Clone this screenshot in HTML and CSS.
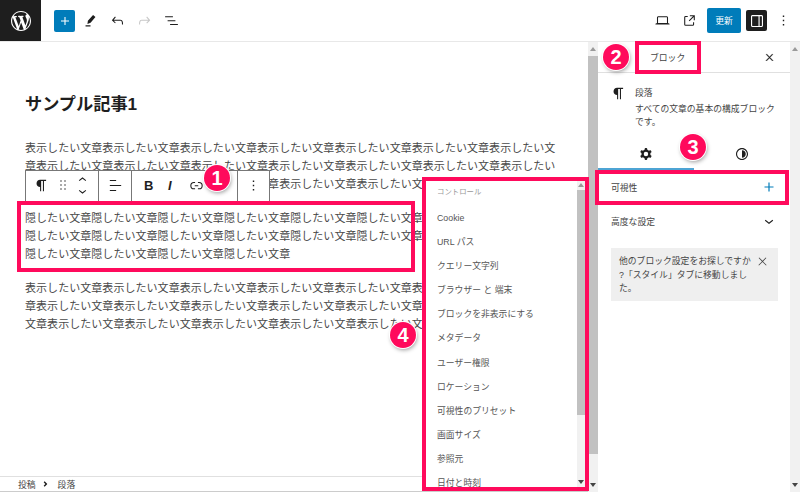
FILE: index.html
```html
<!DOCTYPE html>
<html lang="ja">
<head>
    <meta charset="UTF-8">
    <meta name="viewport" content="width=device-width, initial-scale=1.0">
    <title>サンプル記事1</title>
    <link rel="stylesheet" href="styles.css">
</head>
<body>
    <header class="topbar">
        <div class="wp-logo">
            <svg width="20" height="20" viewBox="0 0 20 20"><path fill="#fff" d="M20 10c0-5.51-4.49-10-10-10C4.48 0 0 4.49 0 10c0 5.52 4.48 10 10 10 5.51 0 10-4.48 10-10zM7.78 15.37L4.37 6.22c.55-.02 1.17-.08 1.17-.08.5-.06.44-1.13-.06-1.11 0 0-1.45.11-2.37.11-.18 0-.37 0-.58-.01C4.12 2.69 6.87 1.11 10 1.11c2.33 0 4.45.87 6.05 2.34-.68-.11-1.65.39-1.65 1.58 0 .74.45 1.36.9 2.1.35.61.55 1.36.55 2.46 0 1.49-1.4 5-1.4 5l-3.03-8.37c.54-.02.82-.17.82-.17.5-.05.44-1.25-.06-1.22 0 0-1.44.12-2.38.12-.87 0-2.33-.12-2.33-.12-.5-.03-.56 1.2-.06 1.22l.92.08 1.26 3.41zM17.41 10c.24-.64.74-1.87.43-4.25.7 1.29 1.05 2.71 1.05 4.25 0 3.29-1.73 6.24-4.4 7.78.97-2.59 1.94-5.2 2.92-7.78zM6.1 18.09C3.12 16.65 1.11 13.53 1.11 10c0-1.3.23-2.48.72-3.59C3.25 10.3 4.67 14.2 6.1 18.09zm4.03-6.63l2.58 6.98c-.86.29-1.76.45-2.71.45-.79 0-1.57-.11-2.29-.33.81-2.38 1.62-4.74 2.42-7.1z"/></svg>
        </div>
        <div class="tools">
            <button class="add-btn"><svg width="16" height="16" viewBox="0 0 24 24"><path fill="#fff" d="M18 11.2h-5.2V6h-1.6v5.2H6v1.6h5.2V18h1.6v-5.2H18z"/></svg></button>
            <span class="tool"><svg width="17" height="17" viewBox="0 0 24 24"><path fill="#1e1e1e" d="M15.6 4.2l3.4 2.9-6.9 8.1-4.4 1.6.6-4.6zM5 18.8h7v1.7H5z"/></svg></span>
            <span class="tool"><svg width="17" height="17" viewBox="0 0 24 24"><path fill="#1e1e1e" d="M18.3 11.7c-.6-.6-1.4-.9-2.3-.9H6.7l2.9-3.3-1.1-1-4.5 5L8.5 16l1-1-2.7-2.7H16c.5 0 .9.2 1.3.5 1 1 1 3.4 1 4.5v.3h1.5v-.2c0-1.5 0-4.3-1.5-5.7z"/></svg></span>
            <span class="tool"><svg width="17" height="17" viewBox="0 0 24 24"><path fill="#c8c8c8" d="M15.6 6.5l-1.1 1 2.9 3.3H8c-.9 0-1.7.3-2.3.9-1.4 1.5-1.4 4.2-1.4 5.6v.2h1.5v-.3c0-1.1 0-3.5 1-4.5.3-.3.7-.5 1.3-.5h9.2L14.5 15l1.1 1.1 4.6-4.6-4.6-5z"/></svg></span>
            <span class="tool"><svg width="17" height="17" viewBox="0 0 24 24"><path fill="#1e1e1e" d="M3 6h11v1.5H3V6zm3.5 5.5h11V13h-11v-1.5zM10 17h11v1.5H10V17z"/></svg></span>
        </div>
        <div class="actions">
            <span class="tool"><svg width="17" height="17" viewBox="0 0 24 24"><path fill="#1e1e1e" d="M20.5 16h-.7V8c0-1.1-.9-2-2-2H6.2c-1.1 0-2 .9-2 2v8h-.7c-.8 0-1.5.7-1.5 1.5h20c0-.8-.7-1.5-1.5-1.5zM5.7 8c0-.3.2-.5.5-.5h11.6c.3 0 .5.2.5.5v7.6H5.7V8z"/></svg></span>
            <span class="tool"><svg width="17" height="17" viewBox="0 0 24 24"><path fill="#1e1e1e" d="M19.5 4.5h-7V6h4.44l-5.97 5.97 1.06 1.06L18 7.06v4.44h1.5v-7Zm-13 1a2 2 0 0 0-2 2v10a2 2 0 0 0 2 2h10a2 2 0 0 0 2-2v-3H17v3a.5.5 0 0 1-.5.5h-10a.5.5 0 0 1-.5-.5v-10a.5.5 0 0 1 .5-.5h3V5.5h-3Z"/></svg></span>
            <button class="save-btn">更新</button>
            <span class="drawer-btn"><svg width="18" height="18" viewBox="0 0 24 24"><path fill="#fff" d="M18 4H6c-1.1 0-2 .9-2 2v12c0 1.1.9 2 2 2h12c1.1 0 2-.9 2-2V6c0-1.1-.9-2-2-2zm-4 14.5H6c-.3 0-.5-.2-.5-.5V6c0-.3.2-.5.5-.5h8v13zm4.5-.5c0 .3-.2.5-.5.5h-2.5v-13H18c.3 0 .5.2.5.5v12z"/></svg></span>
            <span class="more-btn"><svg width="17" height="17" viewBox="0 0 24 24"><path fill="#1e1e1e" d="M13 19h-2v-2h2v2zm0-6h-2v-2h2v2zm0-6h-2V5h2v2z"/></svg></span>
        </div>
    </header>

    <div class="workspace">
        <main class="editor">
            <div class="canvas">
                <h1 class="post-title">サンプル記事1</h1>
                <p>表示したい文章表示したい文章表示したい文章表示したい文章表示したい文章表示したい文章表示したい文章表示したい文章表示したい文章表示したい文章表示したい文章表示したい文章表示したい文章表示したい文章表示したい文章表示したい文章表示したい文章表示したい文章表示したい文章</p>
                <p>隠したい文章隠したい文章隠したい文章隠したい文章隠したい文章隠したい文章隠したい文章隠したい文章隠したい文章隠したい文章隠したい文章隠したい文章隠したい文章隠したい文章隠したい文章隠したい文章隠したい文章隠したい文章隠したい文章隠したい文章</p>
                <p>表示したい文章表示したい文章表示したい文章表示したい文章表示したい文章表示したい文章表示したい文章表示したい文章表示したい文章表示したい文章表示したい文章表示したい文章表示したい文章表示したい文章表示したい文章表示したい文章表示したい文章表示したい文章表示したい文章</p>
            </div>
            <footer class="crumbs"><span>投稿</span><svg width="8" height="8" viewBox="0 0 24 24"><path fill="#1e1e1e" d="M8 4l8 8-8 8-3-3 5-5-5-5z"/></svg><span>段落</span></footer>

            <div class="block-toolbar">
                <div class="tb-group tb-first">
                    <svg width="17" height="17" viewBox="0 0 24 24"><path fill="#1e1e1e" d="m9.99609 14v-.2251l.00391.0001v6.225h1.5v-14.5h2.5v14.5h1.5v-14.5h3v-1.5h-8.50391c-2.76142 0-5 2.23858-5 5 0 2.7614 2.23858 5 5 5z"/></svg>
                    <svg class="drag" width="16" height="16" viewBox="0 0 24 24"><path fill="#555" d="M8 7h2V5H8v2zm0 6h2v-2H8v2zm0 6h2v-2H8v2zm6-14v2h2V5h-2zm0 8h2v-2h-2v2zm0 6h2v-2h-2v2z"/></svg>
                    <span class="movers">
                        <svg width="11" height="8" viewBox="4 6 16 12"><path fill="#1e1e1e" d="M6.5 12.4L12 8l5.5 4.4-.9 1.2L12 10l-4.5 3.6-1-1.2z"/></svg>
                        <svg width="11" height="8" viewBox="4 6 16 12"><path fill="#1e1e1e" d="M17.5 11.6L12 16l-5.5-4.4.9-1.2L12 14l4.6-3.6 1 1.2z"/></svg>
                    </span>
                </div>
                <div class="tb-group tb-align">
                    <svg width="17" height="17" viewBox="0 0 24 24"><path fill="#1e1e1e" d="M4 19.8h8.9v-1.5H4v1.5zm8.9-15.6H4v1.5h8.9V4.2zm-8.9 7v1.5h16v-1.5H4z"/></svg>
                </div>
                <div class="tb-group tb-format">
                    <b class="fmt-b">B</b>
                    <i class="fmt-i">I</i>
                    <svg width="17" height="17" viewBox="0 0 24 24"><path fill="#1e1e1e" d="M10 17.389H8.444A5.194 5.194 0 1 1 8.444 7H10v1.5H8.444a3.694 3.694 0 0 0 0 7.389H10v1.5ZM14 7h1.556a5.194 5.194 0 0 1 0 10.39H14v-1.5h1.556a3.694 3.694 0 0 0 0-7.39H14V7Zm-4.5 6h5v-1.5h-5V13Z"/></svg>
                </div>
                <div class="tb-group tb-more">
                    <svg width="17" height="17" viewBox="0 0 24 24"><path fill="#1e1e1e" d="M13 19h-2v-2h2v2zm0-6h-2v-2h2v2zm0-6h-2V5h2v2z"/></svg>
                </div>
            </div>

            <div class="vis-popover">
                <ul>
                    <li class="vis-head">コントロール</li>
                    <li>Cookie</li>
                    <li>URL パス</li>
                    <li>クエリー文字列</li>
                    <li>ブラウザー と 端末</li>
                    <li>ブロックを非表示にする</li>
                    <li>メタデータ</li>
                    <li>ユーザー権限</li>
                    <li>ロケーション</li>
                    <li>可視性のプリセット</li>
                    <li>画面サイズ</li>
                    <li>参照元</li>
                    <li>日付と時刻</li>
                </ul>
                <div class="scrollbar thin"><span class="arrow up"></span><span class="thumb"></span><span class="arrow down"></span></div>
            </div>
        </main>
        <div class="scrollbar"><span class="arrow up"></span><span class="thumb"></span><span class="arrow down"></span></div>

        <aside class="sidebar">
            <div class="side-head">
                <span>ブロック</span>
                <svg width="11" height="11" viewBox="0 0 24 24"><path fill="#1e1e1e" stroke="#1e1e1e" d="M13 11.8l6.1-6.3-1-1-6.1 6.2-6.1-6.2-1 1 6.1 6.3-6.5 6.7 1 1 6.5-6.6 6.5 6.6 1-1z"/></svg>
            </div>
            <div class="block-card">
                <svg width="17" height="17" viewBox="0 0 24 24"><path fill="#1e1e1e" d="m9.99609 14v-.2251l.00391.0001v6.225h1.5v-14.5h2.5v14.5h1.5v-14.5h3v-1.5h-8.50391c-2.76142 0-5 2.23858-5 5 0 2.7614 2.23858 5 5 5z"/></svg>
                <div>
                    <div class="card-title">段落</div>
                    <div class="card-desc">すべての文章の基本の構成ブロック<br>です。</div>
                </div>
            </div>
            <div class="side-tabs">
                <span class="side-tab active"><svg width="18" height="18" viewBox="0 0 24 24"><path fill="#1e1e1e" fill-rule="evenodd" d="M10.289 4.836A1 1 0 0 1 11.275 4h1.306a1 1 0 0 1 .987.836l.244 1.466c.787.26 1.503.679 2.108 1.218l1.393-.522a1 1 0 0 1 1.216.437l.653 1.13a1 1 0 0 1-.23 1.273l-1.148.944a6.025 6.025 0 0 1 0 2.435l1.149.946a1 1 0 0 1 .23 1.272l-.653 1.13a1 1 0 0 1-1.216.437l-1.394-.522c-.605.54-1.32.958-2.108 1.218l-.244 1.466a1 1 0 0 1-.987.836h-1.306a1 1 0 0 1-.986-.836l-.244-1.466a5.995 5.995 0 0 1-2.108-1.218l-1.394.522a1 1 0 0 1-1.217-.436l-.653-1.131a1 1 0 0 1 .23-1.272l1.149-.946a6.026 6.026 0 0 1 0-2.435l-1.148-.944a1 1 0 0 1-.23-1.272l.653-1.131a1 1 0 0 1 1.217-.437l1.393.522a5.994 5.994 0 0 1 2.108-1.218l.244-1.466ZM14.929 12a3 3 0 1 1-6 0 3 3 0 0 1 6 0Z"/></svg></span>
                <span class="side-tab"><svg width="18" height="18" viewBox="0 0 24 24"><path fill="#1e1e1e" d="M12 4c-4.4 0-8 3.6-8 8s3.6 8 8 8 8-3.6 8-8-3.6-8-8-8zm0 14.5c-3.6 0-6.5-2.9-6.5-6.5S8.4 5.5 12 5.5s6.5 2.9 6.5 6.5-2.9 6.5-6.5 6.5zM12 7v10c2.8 0 5-2.2 5-5s-2.2-5-5-5z"/></svg></span>
            </div>
            <div class="panel-row">
                <span>可視性</span>
                <svg width="18" height="18" viewBox="0 0 24 24"><path fill="#007cba" d="M18 11.2h-5.2V6h-1.6v5.2H6v1.6h5.2V18h1.6v-5.2H18z"/></svg>
            </div>
            <div class="panel-row">
                <span>高度な設定</span>
                <svg width="18" height="18" viewBox="0 0 24 24"><path fill="#1e1e1e" d="M17.5 11.6L12 16l-5.5-4.4.9-1.2L12 14l4.6-3.6 1 1.2z"/></svg>
            </div>
            <div class="notice">
                <p>他のブロック設定をお探しですか<br>?「スタイル」タブに移動しまし<br>た。</p>
                <svg width="13" height="13" viewBox="0 0 24 24"><path fill="#444" d="M13 11.8l6.1-6.3-1-1-6.1 6.2-6.1-6.2-1 1 6.1 6.3-6.5 6.7 1 1 6.5-6.6 6.5 6.6 1-1z"/></svg>
            </div>
        </aside>
        <div class="scrollbar empty"><span class="arrow up"></span><span class="thumb"></span><span class="arrow down"></span></div>
    </div>

    <!-- annotations drawn over the screenshot -->
    <div class="mark box-1"></div>
    <div class="mark box-2"></div>
    <div class="mark box-3"></div>
    <div class="mark box-4"></div>
    <div class="num num-1">1</div>
    <div class="num num-2">2</div>
    <div class="num num-3">3</div>
    <div class="num num-4">4</div>
</body>
</html>
```

FILE: styles.css
```css
* { box-sizing: border-box; }
html, body { height: 100%; }
body { margin: 0; height: 492px; overflow: hidden; display: flex; flex-direction: column; position: relative; background: #fff; color: #1e1e1e; font-family: "Liberation Sans", "Noto Sans CJK JP", sans-serif; font-size: 8.8px; }
svg { display: block; flex: none; }

/* top bar */
.topbar { height: 42px; flex: none; display: flex; align-items: center; border-bottom: 1px solid #e8e8e8; }
.wp-logo { width: 41px; height: 41px; background: #1e1e1e; display: flex; align-items: center; justify-content: center; }
.tools { display: flex; align-items: center; margin-left: 13px; }
.add-btn { width: 21px; height: 22px; padding: 0; border: 0; border-radius: 2px; background: #007cba; display: flex; align-items: center; justify-content: center; margin-right: 2px; }
.tool { width: 27px; display: flex; justify-content: center; }
.tools .tool:nth-child(2) { width: 27px; }
.actions { margin-left: auto; display: flex; align-items: center; }
.save-btn { width: 34px; height: 25px; margin-left: 4px; padding: 0; border: 0; border-radius: 2px; background: #007cba; color: #fff; font: inherit; }
.drawer-btn { width: 21px; height: 21px; margin-left: 5px; border-radius: 2px; background: #1e1e1e; display: flex; align-items: center; justify-content: center; }
.more-btn { width: 21px; margin: 0 6px 0 6px; display: flex; justify-content: center; }

/* main layout */
.workspace { flex: 1; display: flex; min-height: 0; }
.editor { width: 588px; display: flex; flex-direction: column; }
.canvas { flex: 1; padding: 49px 32px 0 25px; }
.post-title { margin: 0 0 22px; font-size: 17.2px; line-height: 26px; font-weight: 700; }
.canvas p { margin: 0 0 16px; font-size: 11px; letter-spacing: 0.05px; line-height: 18px; color: #4a4a4a; }
.crumbs { height: 16px; flex: none; padding-left: 18px; display: flex; align-items: center; gap: 6px; border-top: 1px solid #e0e0e0; border-bottom: 1px solid #ccc; color: #444; }
.crumbs svg + span { margin-left: 2px; }

/* fake windows scrollbars */
.scrollbar { width: 10px; flex: none; display: flex; flex-direction: column; background: #f1f1f1; }
.thumb { display: block; height: 398px; background: #c1c1c1; }
.arrow { display: block; height: 14px; flex: none; position: relative; }
.arrow::after { content: ""; position: absolute; left: 2px; top: 5px; border: 3px solid transparent; }
.arrow.up::after { border-bottom: 4px solid #9a9a9a; border-top: 0; }
.arrow.down { margin-top: auto; }
.arrow.down::after { border-top: 4px solid #444; border-bottom: 0; }
.scrollbar.empty .thumb { background: none; }

/* right sidebar */
.sidebar { width: 192px; flex: none; color: #444; }
.side-head { height: 31px; padding: 0 15px 0 52px; display: flex; align-items: center; justify-content: space-between; border-bottom: 1px solid #e0e0e0; }
.block-card { display: flex; gap: 8px; padding: 12px 0 0 12px; height: 64px; }
.card-title { line-height: 16px; }
.card-desc { margin-top: 2px; line-height: 13px; }
.side-tabs { display: flex; height: 33px; }
.side-tab { width: 96px; display: flex; align-items: center; justify-content: center; }
.side-tab.active { box-shadow: inset 0 -2px 0 #4ea4d4; }
.panel-row { height: 34px; padding: 0 12px 0 13px; display: flex; align-items: center; justify-content: space-between; }
.notice { margin: 10px 12px 0 13px; padding: 7px 9px 0 8px; height: 53px; background: #efefef; display: flex; justify-content: space-between; }
.notice p { margin: 0; line-height: 13.5px; }

/* block toolbar floating above the paragraph */
.block-toolbar { position: absolute; left: 25px; top: 170px; width: 245px; height: 34px; display: flex; background: #fff; border: 1px solid #777; }
.tb-group { display: flex; align-items: center; border-right: 1px solid #777; height: 100%; padding-bottom: 4px; }
.tb-first { width: 73px; padding-left: 7px; }
.drag { margin-left: 5px; }
.movers { display: flex; flex-direction: column; gap: 3px; margin-left: 6px; }
.tb-align { width: 33px; justify-content: center; }
.tb-format { width: 106px; padding-left: 12px; }
.tb-more { width: 31px; border-right: 0; justify-content: center; }
.fmt-b { font-family: "Liberation Sans", sans-serif; font-size: 13px; width: 24px; }
.fmt-i { font-family: "Liberation Sans", sans-serif; font-size: 13px; width: 20px; font-weight: 700; }

/* visibility controls dropdown */
.vis-popover { position: absolute; left: 426px; top: 181px; width: 159px; height: 306px; display: flex; background: #fff; overflow: hidden; color: #555; }
.vis-popover ul { flex: 1; margin: 0; padding: 0 0 0 11px; list-style: none; }
.vis-popover li { height: 24.1px; line-height: 24.1px; }
.vis-popover .vis-head { height: 25px; line-height: 22px; font-size: 7.4px; color: #999; }
.scrollbar.thin { width: 8px; }
.scrollbar.thin .thumb { height: 225px; }
.scrollbar.thin .arrow { height: 9px; }
.scrollbar.thin .arrow::after { left: 1px; top: 2px; }

/* pink annotations */
.mark { position: absolute; border: 4px solid #ff0a5c; }
.box-1 { left: 17px; top: 201px; width: 398px; height: 71px; }
.box-2 { left: 635px; top: 41px; width: 66px; height: 33px; }
.box-3 { left: 595px; top: 170px; width: 194px; height: 35px; }
.box-4 { left: 422px; top: 177px; width: 167px; height: 314px; }
.num { position: absolute; width: 26px; height: 26px; border-radius: 50%; background: #ff0a5c; color: #fff; font-size: 20px; font-weight: 700; line-height: 26px; text-align: center; box-shadow: 0 0 0 1px #fff, 1px 2px 4px rgba(0,0,0,0.4); }
.num-1 { left: 204px; top: 165px; }
.num-2 { left: 603px; top: 44px; }
.num-3 { left: 680px; top: 134px; }
.num-4 { left: 390px; top: 322px; }
```
